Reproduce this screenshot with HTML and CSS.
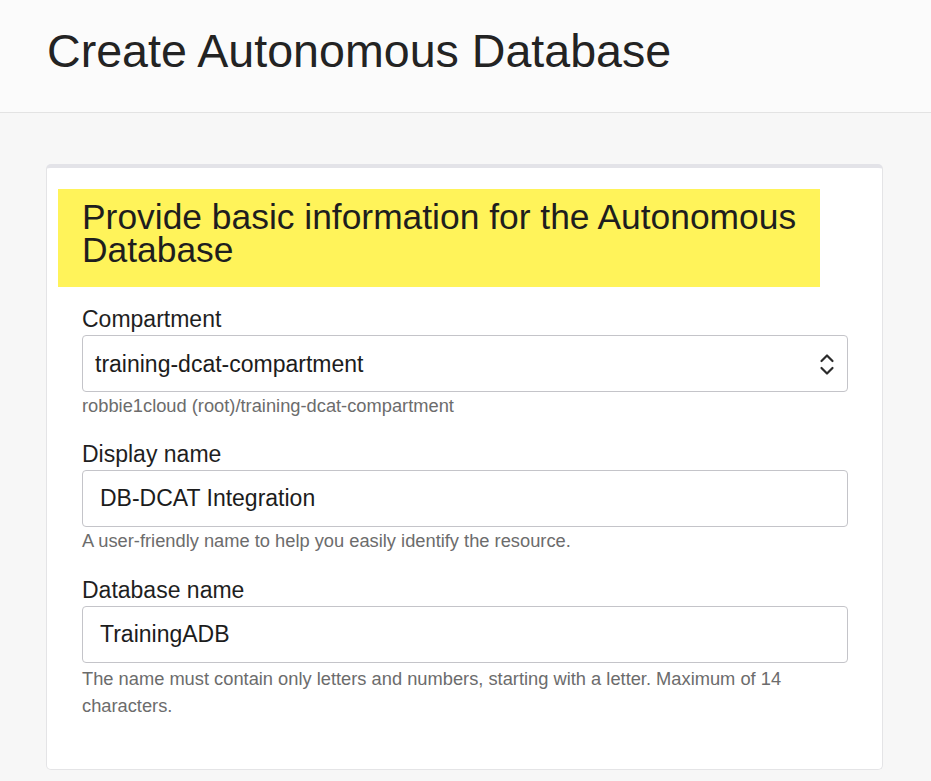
FILE: index.html
```html
<!DOCTYPE html>
<html lang="en">
<head>
<meta charset="utf-8">
<title>Create Autonomous Database</title>
<link rel="stylesheet" href="styles.css">
</head>
<body>
<header class="page-header">
  <h1 class="page-title">Create Autonomous Database</h1>
</header>
<main class="page-main">
  <section class="card">
    <div class="highlight">
      <h2 class="section-title">Provide basic information for the Autonomous Database</h2>
    </div>
    <form class="form">
      <div class="field">
        <label class="label">Compartment</label>
        <div class="control select">
          <span class="value">training-dcat-compartment</span>
          <svg class="chevrons" width="16" height="26" viewBox="0 0 16 26" aria-hidden="true">
            <path d="M2.5 9 L8 3.5 L13.5 9" fill="none" stroke="#2b2b2b" stroke-width="2.2" stroke-linecap="round" stroke-linejoin="round"/>
            <path d="M2.5 16 L8 21.5 L13.5 16" fill="none" stroke="#2b2b2b" stroke-width="2.2" stroke-linecap="round" stroke-linejoin="round"/>
          </svg>
        </div>
        <div class="help">robbie1cloud (root)/training-dcat-compartment</div>
      </div>
      <div class="field">
        <label class="label">Display name</label>
        <div class="control input"><span class="value">DB-DCAT Integration</span></div>
        <div class="help">A user-friendly name to help you easily identify the resource.</div>
      </div>
      <div class="field field-last">
        <label class="label">Database name</label>
        <div class="control input"><span class="value">TrainingADB</span></div>
        <div class="help">The name must contain only letters and numbers, starting with a letter. Maximum of 14 characters.</div>
      </div>
    </form>
  </section>
</main>
</body>
</html>
```

FILE: styles.css
```css
* { box-sizing: border-box; }

html, body {
  margin: 0;
  padding: 0;
}

body {
  background: #f7f7f7;
  font-family: "Liberation Sans", Arial, sans-serif;
  color: #1f1f1f;
  min-height: 781px;
}

.page-header {
  background: #fbfbfb;
  height: 113px;
  border-bottom: 1px solid #e3e3e3;
  padding: 27px 0 0 47px;
}

.page-title {
  margin: 0;
  font-size: 46.6px;
  line-height: 48px;
  font-weight: 400;
  color: #232323;
}

.page-main {
  padding: 51px 0 0 46px;
}

.card {
  width: 837px;
  background: #ffffff;
  border: 1px solid #e4e4e6;
  border-top: 4px solid #e3e3e8;
  border-radius: 5px;
  padding: 21px 34px 50px 11px;
}

.highlight {
  width: 762px;
  height: 98px;
  background: #fff35a;
  padding: 12px 0 0 24px;
}

.section-title {
  margin: 0;
  font-size: 35.4px;
  line-height: 33px;
  font-weight: 400;
  color: #1e1e1e;
}

.form {
  padding: 18px 0 0 24px;
  display: flex;
  flex-direction: column;
  gap: 21px;
}

.field {
  display: flex;
  flex-direction: column;
}

.field-last {
  margin-top: 1px;
}

.label {
  font-size: 23px;
  line-height: 28px;
  margin-bottom: 2px;
  color: #1f1f1f;
}

.control {
  height: 57px;
  border: 1px solid #c4c4c9;
  border-radius: 4px;
  background: #ffffff;
  display: flex;
  align-items: center;
  font-size: 23px;
  color: #1c1c1c;
}

.select {
  padding: 2px 12px 0 12px;
  justify-content: space-between;
}

.input {
  padding: 0 17px;
}

.chevrons {
  display: block;
}

.help {
  font-size: 18.3px;
  line-height: 27px;
  color: #6c6c6c;
}

.field-last .help {
  padding-top: 2px;
}
```
